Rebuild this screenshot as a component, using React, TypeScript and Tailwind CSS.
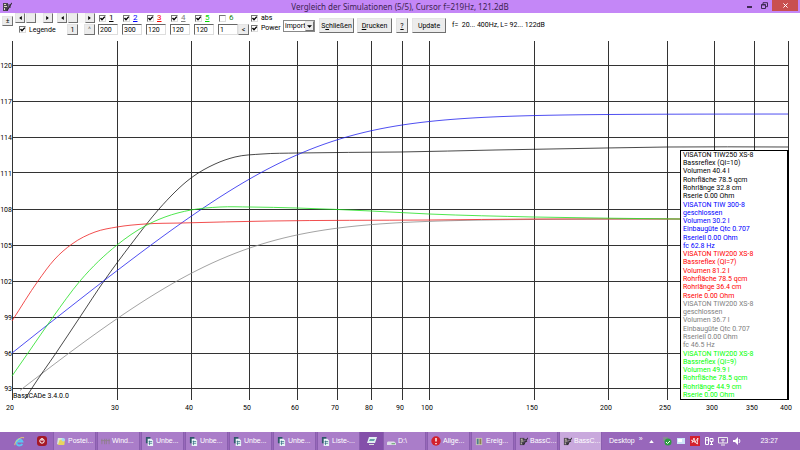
import React, { useState } from 'react';
import type { ReactNode } from 'react';

type Point = [number, number];

// drawing area units of the chart
const CHART_W = 800;
const CHART_H = 392;

const frequencies = [
  { label: '20', x: 12 },
  { label: '30', x: 117 },
  { label: '40', x: 191 },
  { label: '50', x: 249 },
  { label: '60', x: 297 },
  { label: '70', x: 337 },
  { label: '80', x: 371 },
  { label: '90', x: 402 },
  { label: '100', x: 429 },
  { label: '150', x: 534 },
  { label: '200', x: 608 },
  { label: '250', x: 667 },
  { label: '300', x: 714 },
  { label: '350', x: 754 },
  { label: '400', x: 788 },
];

const levels = [
  { label: '120', y: 25 },
  { label: '117', y: 61 },
  { label: '114', y: 97 },
  { label: '111', y: 133 },
  { label: '108', y: 169 },
  { label: '105', y: 205 },
  { label: '102', y: 241 },
  { label: '99', y: 277 },
  { label: '96', y: 313 },
  { label: '93', y: 348 },
];

// closed box with Qtc 0.707: second order high-pass, 12 units per dB
const closedBox = (fc: number, top: number): Point[] => {
  const points: Point[] = [];
  for (let x = 12; x <= 788; x += 8) {
    const f = 20 * Math.pow(20, (x - 12) / 776);
    const y = top + 120 * Math.log10(1 + Math.pow(fc / f, 4));
    if (y < 352) points.push([x, y]);
  }
  return points;
};

const curves: { color: string; points: Point[] }[] = [
  { color: '#8c8c8c', points: closedBox(46.5, 179) },
  {
    color: '#1a1a1a',
    points: [[25, 359], [32, 348], [56, 313], [80, 277], [104, 241], [132, 203], [159, 169], [191, 138], [215, 124], [235, 117], [262, 114], [297, 113], [400, 112], [495, 110], [605, 108], [667, 107], [788, 107]],
  },
  { color: '#2222ee', points: closedBox(62.8, 74) },
  {
    color: '#ee2222',
    points: [[12, 281], [38, 241], [54, 220], [72, 204], [95, 192], [117, 187], [145, 184], [181, 183], [270, 181], [429, 180], [534, 179], [680, 179]],
  },
  {
    color: '#22e022',
    points: [[12, 336], [28, 313], [53, 277], [80, 241], [117, 205], [145, 186], [165, 177], [191, 170], [220, 167], [250, 167], [297, 168], [371, 171], [429, 174], [534, 177], [680, 179]],
  },
];

const legend = [
  { color: 'text-black', lines: ['VISATON TIW250 XS-8', 'Bassreflex (Ql=10)', 'Volumen 40.4 l', 'Rohrfläche 78.5 qcm', 'Rohrlänge 32.8 cm', 'Rserie 0.00 Ohm'] },
  { color: 'text-[#0000ff]', lines: ['VISATON TIW 300-8', 'geschlossen', 'Volumen 30.2 l', 'Einbaugüte Qtc 0.707', 'Rseriell 0.00 Ohm', 'fc 62.8 Hz'] },
  { color: 'text-[#ff0000]', lines: ['VISATON TIW200 XS-8', 'Bassreflex (Ql=7)', 'Volumen 81.2 l', 'Rohrfläche 78.5 qcm', 'Rohrlänge 36.4 cm', 'Rserie 0.00 Ohm'] },
  { color: 'text-[#808080]', lines: ['VISATON TIW200 XS-8', 'geschlossen', 'Volumen 36.7 l', 'Einbaugüte Qtc 0.707', 'Rseriell 0.00 Ohm', 'fc 46.5 Hz'] },
  { color: 'text-[#00ff00]', lines: ['VISATON TIW200 XS-8', 'Bassreflex (Ql=9)', 'Volumen 49.9 l', 'Rohrfläche 78.5 qcm', 'Rohrlänge 44.9 cm', 'Rserie 0.00 Ohm'] },
];

const simulations = [
  { id: 1, color: 'text-black', value: '200', checked: true },
  { id: 2, color: 'text-[#0000ff]', value: '300', checked: true },
  { id: 3, color: 'text-[#ff0000]', value: '120', checked: true },
  { id: 4, color: 'text-[#808080]', value: '120', checked: true },
  { id: 5, color: 'text-[#00d800]', value: '120', checked: true },
  { id: 6, color: 'text-[#208020]', value: '1', checked: false },
];

const px = (v: number) => `${(v / CHART_W) * 100}%`;
const py = (v: number) => `${(v / CHART_H) * 100}%`;

// cubic through all points, slopes weighted by the distance to the neighbours
const smoothPath = (pts: Point[]) => {
  const slopes = pts.map((p, i) => {
    const a = pts[i - 1];
    const b = pts[i + 1];
    if (!a) return (b[1] - p[1]) / (b[0] - p[0]);
    if (!b) return (p[1] - a[1]) / (p[0] - a[0]);
    const h0 = p[0] - a[0];
    const h1 = b[0] - p[0];
    return (((p[1] - a[1]) / h0) * h1 + ((b[1] - p[1]) / h1) * h0) / (h0 + h1);
  });
  let d = `M${pts[0][0]} ${pts[0][1]}`;
  for (let i = 0; i < pts.length - 1; i++) {
    const [x0, y0] = pts[i];
    const [x1, y1] = pts[i + 1];
    const h = (x1 - x0) / 3;
    d += `C${x0 + h} ${y0 + slopes[i] * h} ${x1 - h} ${y1 - slopes[i + 1] * h} ${x1} ${y1}`;
  }
  return d;
};

const raised = 'flex items-center justify-center bg-[#ececec] border border-t-[#e4e4e4] border-l-[#e4e4e4] border-r-[#707070] border-b-[#707070]';

const CadIcon = ({ className }: { className: string }) => (
  <svg viewBox="0 0 10 10" className={className} aria-hidden="true">
    <path d="M1 1h5v8H1z" fill="#4a4450" />
    <path d="M2 2h2v1H2zM2 4h3v1H2zM2 6h1v2H2z" fill="#ddd6c0" />
    <path d="M9.5.5 5 7.5 4.5 9 6 8 10 1.5z" fill="#222" />
    <path d="M5 3h4M6 5h3" stroke="#333" />
  </svg>
);

const Check = ({ label, className = '', defaultChecked = true }: { label: ReactNode; className?: string; defaultChecked?: boolean }) => {
  const [checked, setChecked] = useState(defaultChecked);
  return (
    <label className="flex items-center gap-[3px] whitespace-nowrap">
      <span className="grid size-[7px] shrink-0">
        <input
          type="checkbox"
          checked={checked}
          onChange={e => setChecked(e.target.checked)}
          className="col-start-1 row-start-1 size-[7px] appearance-none border border-t-[#777] border-l-[#777] border-r-[#ddd] border-b-[#ddd] bg-white"
        />
        {checked && (
          <svg viewBox="0 0 7 7" className="pointer-events-none col-start-1 row-start-1 size-[7px]">
            <path d="M1.5 3 3 4.7 5.8 1.6" fill="none" stroke="#000" strokeWidth="1.4" />
          </svg>
        )}
      </span>
      <span className={className}>{label}</span>
    </label>
  );
};

const ScrollBar = ({ name }: { name: string }) => (
  <div className="flex h-[10px] w-[38px] justify-between bg-[#f8f8f8]">
    <button aria-label={`${name} zurück`} className={`${raised} w-[10px]`}>
      <svg viewBox="0 0 4 6" className="h-[4px] w-[3px]"><path d="M4 0v6L0 3z" /></svg>
    </button>
    <span className={`${raised} w-[10px]`} />
    <span className="w-[6px]" />
    <button aria-label={`${name} vor`} className={`${raised} w-[10px]`}>
      <svg viewBox="0 0 4 6" className="h-[4px] w-[3px]"><path d="M0 0v6l4-3z" /></svg>
    </button>
  </div>
);

const TitleBar = () => (
  <header className="grid h-[13px] shrink-0 grid-cols-[1fr_auto_1fr] items-center bg-[#c487f7]">
    <CadIcon className="ml-[2px] size-[10px]" />
    <h1 className="whitespace-nowrap font-['Noto_Sans','Open_Sans',sans-serif] text-[8px] leading-[13px] text-[#3c2450]">
      Vergleich der Simulationen (5/5), Cursor f=219Hz, 121.2dB
    </h1>
    <div className="flex h-full items-start justify-end pr-[2px]">
      <button aria-label="Minimieren" className="flex h-[11px] w-[15px] items-center justify-center">
        <span className="mt-[3px] h-[2px] w-[5px] bg-[#3f2a55]" />
      </button>
      <button aria-label="Verkleinern" className="flex h-[11px] w-[15px] items-center justify-center">
        <svg viewBox="0 0 7 7" className="size-[7px]" fill="none" stroke="#3f2a55">
          <path d="M2 2V.7h4.5v4H5" />
          <path d="M.5 2.5h4v4h-4zM.5 3h4" />
        </svg>
      </button>
      <button aria-label="Schließen" className="flex h-[11px] w-[26px] items-center justify-center bg-[#c9504f]">
        <svg viewBox="0 0 6 6" className="size-[5px]" stroke="#fff" strokeWidth="1.2"><path d="M.5.5l5 5M5.5.5l-5 5" /></svg>
      </button>
    </div>
  </header>
);

const Toolbar = () => (
  <div className="flex h-[27px] shrink-0 items-start text-[7px] leading-[10px]">
    <button aria-label="Anpassen" className={`${raised} mt-[3px] ml-[2px] h-[10px] w-[11px]`}>±</button>
    <div className="ml-[2px] flex w-[80px] flex-col gap-px">
      <div className="flex justify-between">
        <ScrollBar name="Frequenz" />
        <ScrollBar name="Pegel" />
      </div>
      <div className="flex items-center pl-[4px]">
        <Check label="Legende" />
        <button className={`${raised} ml-auto size-[11px]`}>1</button>
        <button className={`${raised} ml-[6px] size-[11px] text-[#777]`}>^</button>
      </div>
    </div>
    <div className="ml-[3px] flex gap-[3px]">
      {simulations.map(sim => (
        <div key={sim.id} className="flex w-[21px] flex-col gap-px">
          <div className="pl-px text-[8px]">
            <Check label={sim.id} defaultChecked={sim.checked} className={sim.checked ? `${sim.color} underline` : sim.color} />
          </div>
          <input
            aria-label={`Wert ${sim.id}`}
            defaultValue={sim.value}
            className="h-[11px] w-[20px] border border-t-[#666] border-l-[#666] border-r-[#ddd] border-b-[#ddd] bg-white pl-px outline-none"
          />
        </div>
      ))}
    </div>
    <button className={`${raised} mt-[11px] -ml-px size-[11px]`}>&lt;</button>
    <div className="ml-[2px] flex w-[32px] flex-col">
      <Check label="abs" />
      <Check label="Power" />
    </div>
    <div className="mt-[7px] grid h-[12px] w-[32px] border border-[#888] bg-white">
      <select aria-label="Import" className="col-start-1 row-start-1 appearance-none bg-transparent pl-px text-[7px] leading-[10px]">
        <option>import</option>
      </select>
      <span className={`${raised} pointer-events-none col-start-1 row-start-1 w-[9px] justify-self-end`}>
        <svg viewBox="0 0 6 3" className="h-[3px] w-[5px]"><path d="M0 0h6L3 3z" /></svg>
      </span>
    </div>
    <button className={`${raised} mt-[5px] ml-[4px] h-[15px] w-[35px]`}>S<u>c</u>hließen</button>
    <button className={`${raised} mt-[5px] ml-[3px] h-[15px] w-[35px]`}><u>D</u>rucken</button>
    <button className={`${raised} mt-[5px] ml-[4px] h-[15px] w-[12px]`}><u>?</u></button>
    <button className={`${raised} mt-[5px] ml-[4px] h-[15px] w-[34px]`}>Update</button>
    <p className="mt-[7px] ml-[6px] whitespace-pre">f=  20... 400Hz, L= 92... 122dB</p>
  </div>
);

const Legend = () => (
  <aside className="absolute top-[28%] right-[11px] bottom-[32px] flex w-[109px] flex-col border border-r-2 border-black bg-white pl-[2px] text-[7px] leading-[8px]">
    {legend.map((group, i) => (
      <ul key={i} className={`flex flex-1 flex-col justify-around ${group.color}`}>
        {group.lines.map(line => (
          <li key={line} className="whitespace-nowrap">{line}</li>
        ))}
      </ul>
    ))}
  </aside>
);

const Chart = () => (
  <main className="relative min-h-0 flex-1">
    <svg className="absolute inset-0 size-full text-[7px]">
      <g stroke="#333" shapeRendering="crispEdges">
        {frequencies.map(f => (
          <line key={f.label} x1={px(f.x)} x2={px(f.x)} y1={py(1)} y2={py(360)} />
        ))}
        {levels.map(l => (
          <line key={l.label} x1={px(12)} x2={px(788)} y1={py(l.y)} y2={py(l.y)} />
        ))}
      </g>
      <svg viewBox={`0 0 ${CHART_W} ${CHART_H}`} preserveAspectRatio="none" width="100%" height="100%">
        {curves.map(c => (
          <path key={c.color} d={smoothPath(c.points)} fill="none" stroke={c.color} strokeWidth="0.8" vectorEffect="non-scaling-stroke" />
        ))}
      </svg>
      {levels.map(l => (
        <text key={l.label} x={px(12)} y={py(l.y + 3)} textAnchor="end">{l.label}</text>
      ))}
      {frequencies.map(f => (
        <text key={f.label} x={px(f.x - 2)} y={py(370)} textAnchor="middle">{f.label}</text>
      ))}
      <text x={px(13)} y={py(358)}>BassCADe 3.4.0.0</text>
    </svg>
    <Legend />
  </main>
);

const DocIcon = () => (
  <svg viewBox="0 0 10 10" className="size-[9px] shrink-0">
    <path d="M1 0h5v7H1z" fill="#31576b" />
    <path d="M3 2h4l2 2v6H3z" fill="#e8f4f6" />
    <path d="M4 5h4M4 7h4M5 4v5" stroke="#357184" strokeWidth=".8" />
  </svg>
);

const FolderIcon = () => (
  <svg viewBox="0 0 10 10" className="size-[9px] shrink-0">
    <path d="M1 1h6l1 7H0z" fill="#dcebd9" />
    <path d="M3 3h6L8 9H1z" fill="#e8d65e" />
    <circle cx="7" cy="3" r="2" fill="#a6d7f5" />
  </svg>
);

const GridIcon = () => (
  <svg viewBox="0 0 10 10" className="size-[9px] shrink-0" stroke="#8f7f8c" fill="none">
    <path d="M1 2v6M4 2v6M6 2v6M9 2v6M0 4h10" />
  </svg>
);

const DriveIcon = () => (
  <svg viewBox="0 0 10 10" className="size-[9px] shrink-0">
    <path d="M1 5h7l2 2v2H0V6z" fill="#dfdfe8" />
    <path d="M5 7h4v1H5z" fill="#4f9d5a" />
  </svg>
);

const AlertIcon = () => (
  <svg viewBox="0 0 10 10" className="size-[10px] shrink-0">
    <circle cx="5" cy="5" r="4.7" fill="#d2202c" />
    <path d="M5 2v3.6M5 7v1.3" stroke="#fff" strokeWidth="1.4" />
  </svg>
);

const BookIcon = () => (
  <svg viewBox="0 0 10 10" className="size-[9px] shrink-0">
    <path d="M1 1h7v8H1z" fill="#c9c7b7" />
    <path d="M2 2h2v6H2z" fill="#4d7d8c" />
    <path d="M5 2h2v6H5z" fill="#8a8150" />
  </svg>
);

const tasks = [
  { label: 'Postei...', icon: <FolderIcon /> },
  { label: 'Wind...', icon: <GridIcon /> },
  { label: 'Unbe...', icon: <DocIcon /> },
  { label: 'Unbe...', icon: <DocIcon /> },
  { label: 'Unbe...', icon: <DocIcon /> },
  { label: 'Unbe...', icon: <DocIcon /> },
  { label: 'Liste-...', icon: <DocIcon /> },
];

const tasksRight = [
  { label: 'D:\\', icon: <DriveIcon /> },
  { label: 'Allge...', icon: <AlertIcon /> },
  { label: 'Ereig...', icon: <BookIcon /> },
  { label: 'BassC...', icon: <CadIcon className="size-[9px] shrink-0" /> },
  { label: 'BassC...', icon: <CadIcon className="size-[9px] shrink-0" />, active: true },
];

const TaskButton = ({ label, icon, active }: { label: string; icon: ReactNode; active?: boolean }) => (
  <button
    className={`flex h-full w-[43px] min-w-0 items-center gap-[2px] border-x border-[#8a5fae] pl-[3px] whitespace-nowrap ${
      active ? 'bg-[#c9a9dd]' : 'bg-[#aa7dc9]'
    }`}
  >
    {icon}
    {label}
  </button>
);

const Tray = () => (
  <div className="flex items-center gap-[4px]">
    <svg viewBox="0 0 6 4" className="h-[3px] w-[5px]"><path d="M3 0l3 4H0z" fill="#fff" /></svg>
    <svg viewBox="0 0 10 10" className="ml-[4px] size-[10px]">
      <path d="M1 1h5v4H1z" fill="#888b96" />
      <circle cx="6" cy="6" r="3.5" fill="#2f9d42" />
      <path d="M4 6l1.5 1.5L8 5" fill="none" stroke="#fff" />
    </svg>
    <svg viewBox="0 0 10 10" className="size-[10px]">
      <path d="M1 2h8v6H1z" fill="#cfe6fa" />
      <path d="M2 3h4v3H2z" fill="#fff" />
    </svg>
    <svg viewBox="0 0 10 10" className="size-[10px]">
      <path d="M0 0h10v10H0z" fill="#d3202e" />
      <path d="M2 7l2-5 1 4 3-4-1 6M1 4l7 4" fill="none" stroke="#fff" strokeWidth=".8" />
    </svg>
    <svg viewBox="0 0 10 10" className="size-[10px]" fill="none" stroke="#fff">
      <path d="M1.5 1.5v7h3v-7zM1.5 4h3M6 2.5h3v3H6zM7.5 5.5v3M6 8.5h3" />
    </svg>
    <svg viewBox="0 0 10 10" className="size-[10px]" fill="none" stroke="#eee">
      <path d="M.5 1.5h9v5.500h-9zM3 9h4M5 3v4M3 4h4" />
    </svg>
    <svg viewBox="0 0 10 10" className="size-[10px]">
      <path d="M1 4h2l3-3v8L3 6H1z" fill="#fff" />
      <path d="M7 3q2 2 0 4" fill="none" stroke="#fff" />
    </svg>
  </div>
);

const Taskbar = () => (
  <footer className="flex h-[18px] shrink-0 items-center bg-[#9867bb] font-['Liberation_Sans',Arial,sans-serif] text-[7px] text-white">
    <button aria-label="Internet Explorer" className="ml-[14px]">
      <svg viewBox="0 0 12 12" className="size-[11px]" fill="none">
        <path d="M9 8.5A3.4 3.4 0 1 1 9.2 6H3.5" stroke="#5cc5f4" strokeWidth="2" />
        <path d="M1 10C0 7 7 0 11 2" stroke="#ecd66d" />
      </svg>
    </button>
    <button aria-label="Ein/Aus" className="mr-[6px] ml-[12px]">
      <svg viewBox="0 0 10 10" className="size-[10px]">
        <rect width="10" height="10" rx="3" fill="#a51826" />
        <circle cx="5" cy="5" r="2.2" fill="none" stroke="#fff" />
        <path d="M5 2v3" stroke="#fff" />
      </svg>
    </button>
    <nav className="flex h-full gap-px">
      {tasks.map((task, i) => (
        <TaskButton key={i} {...task} />
      ))}
    </nav>
    <button aria-label="Bildschirm" className="flex h-full w-[23px] items-center justify-center bg-[#8450aa]">
      <svg viewBox="0 0 10 10" className="size-[10px]">
        <path d="M2 1h8L8 7H0z" fill="#e3eef2" />
        <path d="M3 3h5L7 5H2z" fill="#63a1a5" />
        <path d="M2 8h5v1H2z" fill="#ddd" />
      </svg>
    </button>
    <nav className="flex h-full gap-px">
      {tasksRight.map((task, i) => (
        <TaskButton key={i} {...task} />
      ))}
    </nav>
    <span className="ml-[7px]">Desktop</span>
    <span className="mr-auto ml-[4px] pb-[4px]">»</span>
    <Tray />
    <time className="mr-[22px] ml-[18px]">23:27</time>
  </footer>
);

const App = () => (
  <div className="flex h-screen flex-col overflow-hidden bg-white font-[Roboto,'Liberation_Sans',sans-serif] text-black">
    <TitleBar />
    <Toolbar />
    <Chart />
    <Taskbar />
  </div>
);

export default App;
